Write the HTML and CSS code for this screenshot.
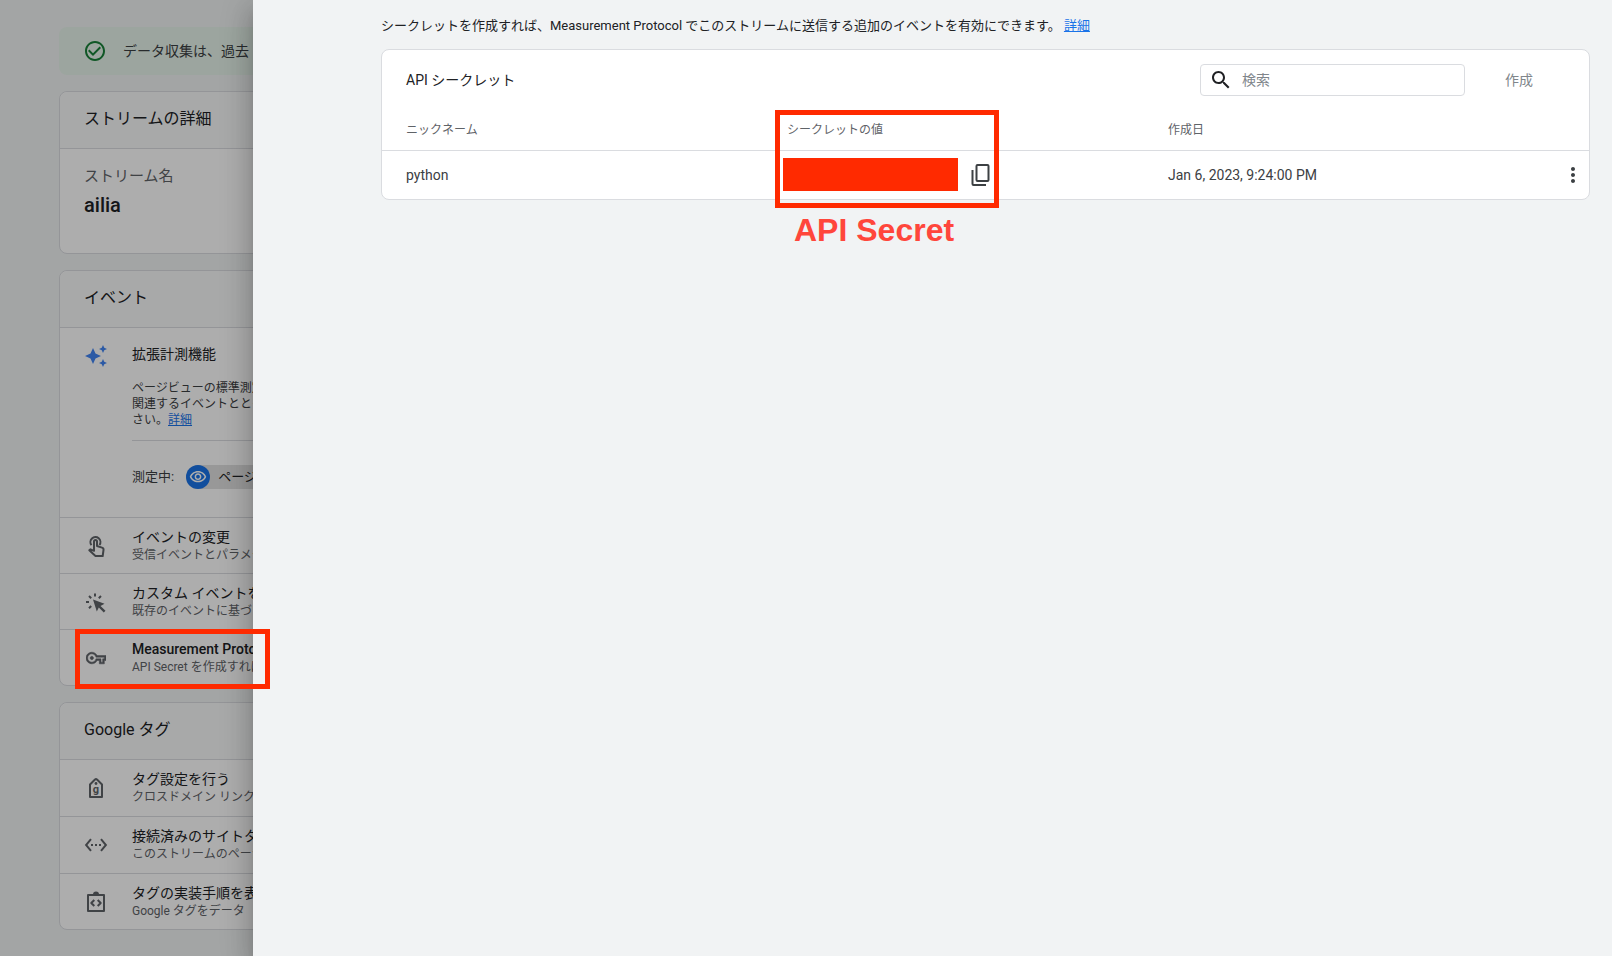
FILE: index.html
```html
<!DOCTYPE html>
<html lang="ja">
<head>
<meta charset="utf-8">
<title>API シークレット</title>
<link rel="stylesheet" href="styles.css">
</head>
<body>
<main class="stream">
  <div class="banner">
    <svg class="icon icon-ok" viewBox="0 0 24 24"><path d="M16.59 7.58L10 14.17l-3.59-3.58L5 12l5 5 8-8zM12 2C6.48 2 2 6.48 2 12s4.48 10 10 10 10-4.48 10-10S17.52 2 12 2zm0 18c-4.42 0-8-3.58-8-8s3.58-8 8-8 8 3.58 8 8-3.58 8-8 8z"/></svg>
    <span>データ収集は、過去</span>
  </div>

  <section class="card">
    <h2 class="card-head">ストリームの詳細</h2>
    <dl class="details">
      <dt>ストリーム名</dt>
      <dd>ailia</dd>
    </dl>
  </section>

  <section class="card">
    <h2 class="card-head">イベント</h2>
    <div class="enhanced">
      <svg class="icon icon-spark" viewBox="0 0 24 24"><path d="M19 9l1.25-2.75L23 5l-2.75-1.25L19 1l-1.25 2.75L15 5l2.75 1.25L19 9zm-7.5.5L9 4 6.5 9.5 1 12l5.5 2.5L9 20l2.500-5.500L17 12l-5.500-2.500zM19 15l-1.250 2.750L15 19l2.750 1.250L19 23l1.250-2.750L23 19l-2.750-1.250L19 15z"/></svg>
      <div class="enhanced-body">
        <h3 class="enhanced-title">拡張計測機能</h3>
        <p class="enhanced-text">ページビューの標準測定に<br>関連するイベントととも<br>さい。<a href="#">詳細</a></p>
        <div class="measuring">
          <span>測定中:</span>
          <span class="chip"><span class="chip-icon"><svg viewBox="0 0 24 24"><path d="M12 6c3.790 0 7.170 2.130 8.820 5.500C19.170 14.870 15.790 17 12 17s-7.170-2.130-8.820-5.500C4.830 8.130 8.210 6 12 6m0-2C7 4 2.730 7.110 1 11.500 2.730 15.890 7 19 12 19s9.270-3.110 11-7.500C21.270 7.110 17 4 12 4zm0 5c1.380 0 2.500 1.120 2.500 2.500S13.380 14 12 14s-2.500-1.120-2.500-2.500S10.620 9 12 9m0-2c-2.480 0-4.500 2.020-4.500 4.500S9.520 16 12 16s4.500-2.020 4.500-4.500S14.480 7 12 7z"/></svg></span>ページビュー</span>
        </div>
      </div>
    </div>
    <ul class="items">
      <li class="item">
        <svg class="icon" viewBox="0 0 24 24"><g fill="none" stroke="currentColor" stroke-width="2" stroke-linejoin="round"><path d="M7.500 11.200A5 5 0 1 1 15.500 11"/><path d="M10 16.800V7.500a1.500 1.500 0 0 1 3 0V12l5 1.600c1.200.4 1.700 1.200 1.500 2.400L18.700 22h-7.200L5.300 16.300l1.200-1z"/></g></svg>
        <div><h3 class="item-title">イベントの変更</h3><p class="item-text">受信イベントとパラメータ</p></div>
      </li>
      <li class="item">
        <svg class="icon" viewBox="0 0 24 24"><path d="M9 9.500l11.500 4.300-4 2.200 5 4.800-1.700 1.700-5-4.900-2 3.900z"/><path fill="none" stroke="currentColor" stroke-width="2" d="M11 3.500v3M5 6l2.200 2.200M17 6l-2.200 2.200M2 12h3M5 18.200L7.200 16"/></svg>
        <div><h3 class="item-title">カスタム イベントを作成</h3><p class="item-text">既存のイベントに基づいて</p></div>
      </li>
      <li class="item">
        <svg class="icon icon-key" viewBox="0 0 24 24"><path stroke="currentColor" stroke-width=".6" d="M22 19h-6v-4h-2.680c-1.140 2.420-3.600 4-6.320 4-3.860 0-7-3.140-7-7s3.140-7 7-7c2.720 0 5.170 1.580 6.320 4H24v6h-2v4zm-4-2h2v-4h2v-2H11.940l-.23-.67C11.010 8.340 9.110 7 7 7c-2.760 0-5 2.240-5 5s2.240 5 5 5c2.110 0 4.010-1.340 4.710-3.330l.23-.67H18v4zM7 14c-1.100 0-2-.9-2-2s.9-2 2-2 2 .9 2 2-.9 2-2 2z"/></svg>
        <div><h3 class="item-title item-title-strong">Measurement Protocol</h3><p class="item-text">API Secret を作成すれば</p></div>
        <span class="mark mark-item"></span>
      </li>
    </ul>
  </section>

  <section class="card">
    <h2 class="card-head">Google タグ</h2>
    <ul class="items items-tag">
      <li class="item">
        <svg class="icon" viewBox="0 0 24 24"><path fill="none" stroke="currentColor" stroke-width="2" stroke-linejoin="round" d="M6 21V8.500l5-5q1-.8 2 0l5 5V21z"/><circle cx="12" cy="7.500" r="1.400"/><text class="tag-letter" x="12" y="17" text-anchor="middle">g</text></svg>
        <div><h3 class="item-title">タグ設定を行う</h3><p class="item-text">クロスドメイン リンク</p></div>
      </li>
      <li class="item">
        <svg class="icon" viewBox="0 0 24 24"><path d="M7.770 6.760L6.230 5.480.820 12l5.410 6.520 1.540-1.280L3.420 12l4.350-5.240zM7 13h2v-2H7v2zm10-2h-2v2h2v-2zm-6 2h2v-2h-2v2zm6.770-7.520l-1.540 1.280L20.580 12l-4.350 5.240 1.540 1.280L23.180 12l-5.410-6.520z"/></svg>
        <div><h3 class="item-title">接続済みのサイトタグ</h3><p class="item-text">このストリームのページ</p></div>
      </li>
      <li class="item">
        <svg class="icon" viewBox="0 0 24 24"><path fill="none" stroke="currentColor" stroke-width="2" stroke-linejoin="round" d="M4 5h16v16H4zM10.300 10l-3 3 3 3M13.700 10l3 3-3 3"/><path d="M9 4.500a3 3 0 0 1 6 0z"/></svg>
        <div><h3 class="item-title">タグの実装手順を表示</h3><p class="item-text">Google タグをデータ</p></div>
      </li>
    </ul>
  </section>
</main>

<div class="scrim"></div>

<aside class="drawer">
  <p class="intro">シークレットを作成すれば、Measurement Protocol でこのストリームに送信する追加のイベントを有効にできます。 <a href="#">詳細</a></p>
  <section class="panel">
    <header class="panel-head">
      <h1 class="panel-title">API シークレット</h1>
      <label class="search">
        <svg class="icon" viewBox="0 0 24 24"><path d="M15.500 14h-.79l-.28-.27C15.410 12.590 16 11.110 16 9.500 16 5.910 13.090 3 9.500 3S3 5.910 3 9.500 5.910 16 9.500 16c1.610 0 3.090-.59 4.230-1.570l.27.28v.79l5 4.990L20.490 19l-4.990-5zm-6 0C7.010 14 5 11.990 5 9.500S7.010 5 9.500 5 14 7.010 14 9.500 11.990 14 9.500 14z"/></svg>
        <input type="search" placeholder="検索" aria-label="検索">
      </label>
      <button class="create" type="button">作成</button>
    </header>
    <table class="secrets">
      <colgroup><col><col><col><col class="col-menu"></colgroup>
      <thead>
        <tr><th>ニックネーム</th><th>シークレットの値</th><th>作成日</th><th></th></tr>
      </thead>
      <tbody>
        <tr>
          <td>python</td>
          <td class="secret">
            <div class="secret-value">
              <span class="redacted"></span>
              <button class="icon-button" type="button" aria-label="コピー"><svg viewBox="0 0 24 24"><path fill="none" stroke="currentColor" stroke-width="2" d="M8.500 2h10q1 0 1 1v14q0 1-1 1h-10q-1 0-1-1V3q0-1 1-1zM3.500 7v14q0 1 1 1H17"/></svg></button>
            </div>
            <span class="mark mark-secret"></span>
            <strong class="mark-label">API Secret</strong>
          </td>
          <td>Jan 6, 2023, 9:24:00 PM</td>
          <td class="menu"><button class="icon-button" type="button" aria-label="メニュー"><svg viewBox="0 0 24 24"><path d="M12 8c1.100 0 2-.9 2-2s-.9-2-2-2-2 .9-2 2 .9 2 2 2zm0 2c-1.100 0-2 .9-2 2s.9 2 2 2 2-.9 2-2-.9-2-2-2zm0 6c-1.100 0-2 .9-2 2s.9 2 2 2 2-.9 2-2-.9-2-2-2z"/></svg></button></td>
        </tr>
      </tbody>
    </table>
  </section>
</aside>
</body>
</html>
```
FILE: styles.css
```css
* { box-sizing: border-box; }

body {
  position: relative;
  margin: 0;
  min-height: 100vh;
  overflow-x: hidden;
  background: #f1f3f4;
  color: #3c4043;
  font-family: Roboto, "Noto Sans CJK JP", sans-serif;
  font-size: 14px;
  line-height: 20px;
}

h1, h2, h3, p, ul, dl, dd { margin: 0; padding: 0; font-weight: 400; }
ul { list-style: none; }
a { color: #1a73e8; text-decoration: underline; }
svg { display: block; fill: currentColor; }
.icon { width: 24px; height: 24px; flex: none; }

/* Page behind the drawer */
.stream {
  display: flex;
  flex-direction: column;
  gap: 16px;
  padding: 27px 59px 24px;
}

.banner {
  display: flex;
  align-items: center;
  gap: 16px;
  height: 48px;
  padding: 0 24px;
  border-radius: 8px;
  background: #e6f4ea;
}
.icon-ok { color: #188038; }

.card {
  border: 1px solid #dadce0;
  border-radius: 8px;
  background: #fff;
}
.card-head {
  padding: 15px 24px 17px;
  border-bottom: 1px solid #dadce0;
  border-radius: 8px 8px 0 0;
  background: #f8f9fa;
  color: #202124;
  font-size: 16px;
  line-height: 24px;
}

.details { padding: 15px 24px 34px; }
.details dt { color: #5f6368; font-size: 15px; line-height: 24px; }
.details dd { padding-top: 3px; color: #202124; font-size: 20px; font-weight: 500; line-height: 28px; }

.enhanced {
  display: flex;
  gap: 24px;
  padding: 16px 0 28px 24px;
}
.enhanced-body { flex: 1; }
.enhanced-title { color: #202124; font-size: 14px; }
.enhanced-text {
  padding: 16px 0 12px;
  border-bottom: 1px solid #dadce0;
  font-size: 12px;
  line-height: 16px;
}
.measuring {
  display: flex;
  align-items: center;
  gap: 12px;
  padding-top: 24px;
  font-size: 13px;
}
.chip {
  display: flex;
  align-items: center;
  gap: 8px;
  padding-right: 12px;
  border-radius: 12px;
  background: #e0e0e0;
  color: #202124;
  line-height: 24px;
}
.chip-icon {
  padding: 3px;
  border-radius: 50%;
  background: #1a73e8;
  color: #fff;
}
.chip-icon svg { width: 18px; height: 18px; }

.item {
  position: relative;
  display: flex;
  align-items: center;
  gap: 24px;
  height: 56px;
  padding: 0 24px;
  border-top: 1px solid #dadce0;
}
.items-tag .item:first-child { border-top: 0; }
.items-tag .item:nth-child(2) { height: 57px; }
.item .icon { color: #5f6368; }
.icon-key { padding: 2px; }
.icon-spark { color: #4285f4; }
.item-title { color: #202124; font-size: 14px; line-height: 18px; }
.item-title-strong { font-weight: 500; }
.item-text { color: #5f6368; font-size: 12px; line-height: 18px; }
.tag-letter { font-size: 11px; font-weight: 700; }

.scrim {
  position: absolute;
  inset: 0;
  background: rgba(0, 0, 0, .32);
}

/* Drawer */
.drawer {
  position: absolute;
  top: 0;
  right: 0;
  bottom: 0;
  left: 253px;
  padding: 16px 22px 24px 128px;
  background: #f1f3f4;
  box-shadow: 0 8px 10px -5px rgba(0, 0, 0, .2), 0 16px 24px 2px rgba(0, 0, 0, .14), 0 6px 30px 5px rgba(0, 0, 0, .12);
}
.intro { padding-bottom: 13px; color: #202124; font-size: 13px; }

.panel {
  border: 1px solid #dadce0;
  border-radius: 8px;
  background: #fff;
}
.panel-head {
  display: flex;
  align-items: center;
  padding: 14px 56px 12px 24px;
}
.panel-title { flex: 1; color: #202124; font-size: 14px; }
.search {
  display: flex;
  align-items: center;
  gap: 9px;
  width: 265px;
  height: 32px;
  margin-right: 40px;
  padding: 0 8px;
  border: 1px solid #dadce0;
  border-radius: 4px;
  color: #202124;
}
.search input {
  flex: 1;
  min-width: 0;
  padding: 0;
  border: 0;
  outline: 0;
  background: none;
  font: inherit;
}
.search input::placeholder { color: #80868b; }
.create {
  padding: 0;
  border: 0;
  background: none;
  color: #80868b;
  font: inherit;
}

.secrets {
  width: 100%;
  border-collapse: collapse;
  table-layout: fixed;
}
.col-menu { width: 64px; }
.secrets th, .secrets td { padding: 0 0 0 24px; text-align: left; }
.secrets th {
  height: 42px;
  padding-top: 2px;
  border-bottom: 1px solid #dadce0;
  color: #5f6368;
  font-size: 12px;
  font-weight: 400;
}
.secrets td { height: 49px; }
.secrets .secret { position: relative; padding-left: 20px; }
.secret-value { display: flex; align-items: center; gap: 11px; }
.redacted { width: 175px; height: 33px; background: #ff2a00; }
.secrets .menu { padding: 0 4px 0 0; }
.menu .icon-button { margin-left: auto; }
.icon-button {
  display: block;
  padding: 0;
  border: 0;
  background: none;
  color: #3c4043;
}
.icon-button svg { width: 24px; height: 24px; }

/* Red annotations */
.mark { position: absolute; z-index: 2; border: 5px solid #ff2a00; }
.mark-item { top: -1px; left: 15px; width: 195px; height: 60px; }
.mark-secret { top: -41px; left: 12px; width: 224px; height: 98px; }
.mark-label {
  position: absolute;
  top: 59px;
  left: 31px;
  color: #ff463b;
  font-family: "Liberation Sans", sans-serif;
  font-size: 32px;
  line-height: 40px;
  white-space: nowrap;
}
```
